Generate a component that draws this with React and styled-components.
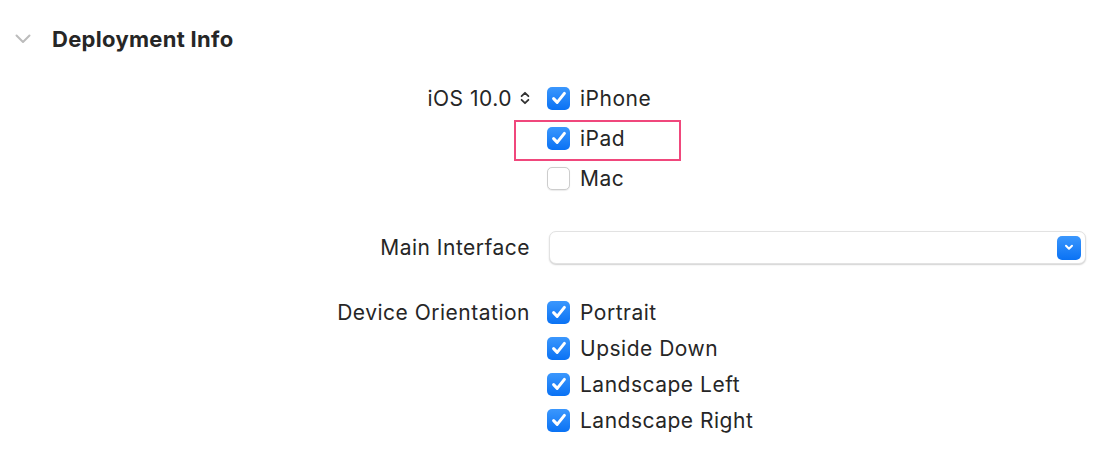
import React from "react";
import styled, { createGlobalStyle } from "styled-components";

const Global = createGlobalStyle`
  html, body { margin: 0; padding: 0; background: #ffffff; }
  body { font-family: Inter, "Noto Sans", sans-serif; color: #262626; -webkit-font-smoothing: antialiased; }
`;

const Page = styled.div`
  width: 1104px;
  height: 450px;
  box-sizing: border-box;
  padding-right: 18px;
`;

const Header = styled.div`
  height: 78px;
  display: flex;
  align-items: center;
  padding-left: 15px;
  gap: 21px;
`;

const Title = styled.h2`
  margin: 0;
  font-size: 22px;
  font-weight: 700;
  color: #262626;
  letter-spacing: 0.3px;
`;

const Form = styled.div`
  display: grid;
  grid-template-columns: 530px 1fr;
  column-gap: 17px;
`;

const Label = styled.div`
  display: flex;
  align-items: center;
  justify-content: flex-end;
  gap: ${(p) => p.$gap || 0}px;
  height: ${(p) => p.$h}px;
  font-size: 21px;
  letter-spacing: 0.5px;
  color: #262626;
`;

const LabelCell = styled.div`
  margin-top: ${(p) => p.$mt || 0}px;
`;

const Controls = styled.div`
  display: flex;
  flex-direction: column;
  margin-top: ${(p) => p.$mt || 0}px;
`;

const CheckRow = styled.label`
  position: relative;
  display: flex;
  align-items: center;
  gap: 10px;
  height: ${(p) => p.$h}px;
  font-size: 21px;
  letter-spacing: 0.5px;
  color: #262626;
`;

const Box = styled.span`
  width: 23px;
  height: 23px;
  box-sizing: border-box;
  border-radius: 5px;
  display: flex;
  align-items: center;
  justify-content: center;
  flex-shrink: 0;
  background: ${(p) => (p.$on ? "linear-gradient(#3b97fd, #0a72f4)" : "#ffffff")};
  border: ${(p) => (p.$on ? "none" : "1px solid #cdcdcd")};
  box-shadow: ${(p) => (p.$on ? "none" : "0 0.5px 1px rgba(0,0,0,0.08)")};
`;

const Highlight = styled.span`
  position: absolute;
  left: -33px;
  top: 2px;
  width: 167px;
  height: 41px;
  box-sizing: border-box;
  border: 2px solid #f0477c;
  pointer-events: none;
`;

const Popup = styled.div`
  height: 33px;
  box-sizing: border-box;
  margin-left: 2px;
  border-radius: 7px;
  background: #ffffff;
  border: 1px solid #e2e2e2;
  box-shadow: 0 1px 1.5px rgba(0, 0, 0, 0.18);
  display: flex;
  align-items: center;
  justify-content: flex-end;
  padding-right: 4px;
`;

const PopupButton = styled.span`
  width: 24px;
  height: 24px;
  border-radius: 5px;
  background: linear-gradient(#3b97fd, #0a72f4);
  display: flex;
  align-items: center;
  justify-content: center;
`;

const Check = () => (
  <svg width="18" height="18" viewBox="0 0 18 18">
    <path d="M3.6 9.6 L7.2 13.4 L14.4 4.4" fill="none" stroke="#fff" strokeWidth="3" strokeLinecap="round" strokeLinejoin="round" />
  </svg>
);

const CheckItem = ({ on, text, h = 40, highlight }) => (
  <CheckRow $h={h}>
    <Box $on={on}>{on && <Check />}</Box>
    {text}
    {highlight && <Highlight />}
  </CheckRow>
);

export default function App() {
  return (
    <Page>
      <Global />
      <Header>
        <svg width="16" height="10" viewBox="0 0 16 10">
          <path d="M1.5 1.5 L8 8 L14.5 1.5" fill="none" stroke="#bcbcbc" strokeWidth="2" strokeLinecap="round" strokeLinejoin="round" />
        </svg>
        <Title>Deployment Info</Title>
      </Header>
      <Form>
        <LabelCell>
          <Label $h={40} $gap={8}>
            iOS 10.0
            <svg width="10" height="14" viewBox="0 0 10 14">
              <path d="M1.6 5.2 L5 1.8 L8.4 5.2 M1.6 8.8 L5 12.2 L8.4 8.8" fill="none" stroke="#333" strokeWidth="1.8" strokeLinecap="round" strokeLinejoin="round" />
            </svg>
          </Label>
        </LabelCell>
        <Controls>
          <CheckItem on text="iPhone" />
          <CheckItem on text="iPad" highlight />
          <CheckItem text="Mac" />
        </Controls>

        <LabelCell $mt={33}>
          <Label $h={33}>Main Interface</Label>
        </LabelCell>
        <Controls $mt={33}>
          <Popup>
            <PopupButton>
              <svg width="10" height="7" viewBox="0 0 10 7">
                <path d="M2 1.8 L5 4.8 L8 1.8" fill="none" stroke="#fff" strokeWidth="2" strokeLinecap="round" strokeLinejoin="round" />
              </svg>
            </PopupButton>
          </Popup>
        </Controls>

        <LabelCell $mt={30}>
          <Label $h={36}>Device Orientation</Label>
        </LabelCell>
        <Controls $mt={30}>
          <CheckItem on h={36} text="Portrait" />
          <CheckItem on h={36} text="Upside Down" />
          <CheckItem on h={36} text="Landscape Left" />
          <CheckItem on h={36} text="Landscape Right" />
        </Controls>
      </Form>
    </Page>
  );
}
